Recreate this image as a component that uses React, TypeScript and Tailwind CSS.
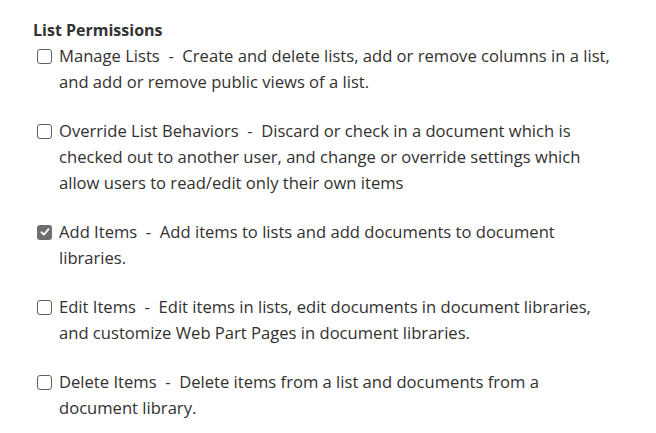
import React from "react";

type Permission = {
  name: string;
  lines: string[];
  checked?: boolean;
};

const permissions: Permission[] = [
  {
    name: "Manage Lists",
    lines: [
      "Create and delete lists, add or remove columns in a list,",
      "and add or remove public views of a list.",
    ],
  },
  {
    name: "Override List Behaviors",
    lines: [
      "Discard or check in a document which is",
      "checked out to another user, and change or override settings which",
      "allow users to read/edit only their own items",
    ],
  },
  {
    name: "Add Items",
    checked: true,
    lines: ["Add items to lists and add documents to document", "libraries."],
  },
  {
    name: "Edit Items",
    lines: [
      "Edit items in lists, edit documents in document libraries,",
      "and customize Web Part Pages in document libraries.",
    ],
  },
  {
    name: "Delete Items",
    lines: ["Delete items from a list and documents from a", "document library."],
  },
];

function Checkbox({ checked }: { checked?: boolean }) {
  if (checked) {
    return (
      <span className="mt-[5.5px] flex size-[15px] shrink-0 items-center justify-center rounded-[3px] bg-[#6e6e6e]">
        <svg viewBox="0 0 14 14" className="size-[12px]" fill="none">
          <path
            d="M2.8 7.3 L5.7 10.1 L11.2 3.7"
            stroke="#fff"
            strokeWidth="2.1"
            strokeLinecap="round"
            strokeLinejoin="round"
          />
        </svg>
      </span>
    );
  }
  return (
    <span className="mt-[5.5px] block size-[15px] shrink-0 rounded-[3px] border-[1.5px] border-[#616161] bg-white" />
  );
}

export default function App() {
  return (
    <div
      className="h-[433px] w-[656px] bg-white pl-[33px] pt-[20px] text-[#323130]"
      style={{ fontFamily: '"Open Sans", "Noto Sans", sans-serif' }}
    >
      <h2 className="text-[16px] font-bold leading-[20px] text-[#333]">
        List Permissions
      </h2>
      <div className="mt-[3px] flex flex-col gap-[23px] pl-[4px]">
        {permissions.map((p) => (
          <div key={p.name} className="flex gap-[7px]">
            <Checkbox checked={p.checked} />
            <p className="whitespace-nowrap text-[16.6px] leading-[26px]">
              {p.name}
              {"\u00a0\u00a0-\u00a0\u00a0"}
              {p.lines.map((line, i) => (
                <React.Fragment key={i}>
                  {i > 0 && <br />}
                  {line}
                </React.Fragment>
              ))}
            </p>
          </div>
        ))}
      </div>
    </div>
  );
}
